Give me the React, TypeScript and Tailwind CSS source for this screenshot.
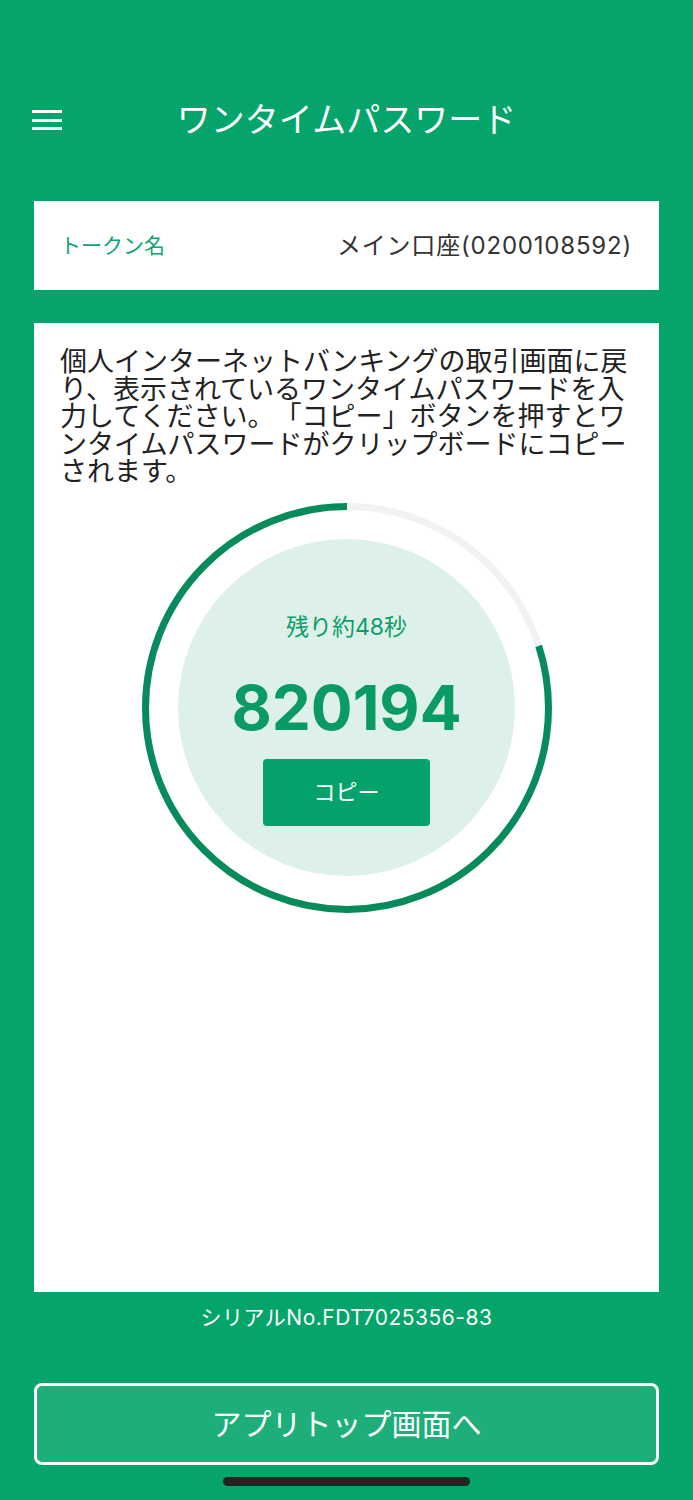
import React from 'react'

const RING_R = 201.5
const RING_C = 2 * Math.PI * RING_R

function ProgressRing({ remaining }: { remaining: number }) {
  // remaining: 0..1 share of the ring still green
  const green = RING_C * remaining
  return (
    <svg className="absolute inset-0" width="410" height="410" viewBox="0 0 410 410">
      <circle cx="205" cy="205" r={RING_R} fill="none" stroke="#F2F2F2" strokeWidth="7" />
      <circle
        cx="205"
        cy="205"
        r={RING_R}
        fill="none"
        stroke="#078B5A"
        strokeWidth="7"
        strokeDasharray={`${green} ${RING_C}`}
        strokeDashoffset={-(RING_C - green)}
        transform="rotate(-90 205 205)"
      />
    </svg>
  )
}

export default function App() {
  return (
    <div className="min-h-[1500px] w-full bg-[#04A46B] flex flex-col font-['Inter','Noto_Sans_CJK_JP',sans-serif] [text-spacing-trim:space-all]">
      {/* Header */}
      <header className="mt-[90px] h-[60px] px-[32px] grid grid-cols-[1fr_auto_1fr] items-center">
        <button className="flex flex-col gap-[5.5px] w-[30px]" aria-label="menu">
          <span className="block h-[3px] w-[30px] bg-white" />
          <span className="block h-[3px] w-[30px] bg-white" />
          <span className="block h-[3px] w-[30px] bg-white" />
        </button>
        <h1 className="text-white text-[34px] leading-[40px] font-normal">ワンタイムパスワード</h1>
        <div />
      </header>

      <div className="px-[34px] flex flex-col">
        {/* Token name */}
        <div className="mt-[51px] h-[89px] bg-white flex items-center justify-between pl-[26px] pr-[27px]">
          <span className="text-[21px] text-[#0FA56F]">トークン名</span>
          <span className="text-[24px] tracking-[0.8px] text-[#333333]">メイン口座(0200108592)</span>
        </div>

        {/* Main card */}
        <div className="mt-[33px] h-[969px] bg-white pt-[25px] px-[26px] flex flex-col">
          <p className="text-[27px] leading-[27.5px] text-[#222222]">
            個人インターネットバンキングの取引画面に戻
            <br />
            り、表示されているワンタイムパスワードを入
            <br />
            力してください。「コピー」ボタンを押すとワ
            <br />
            ンタイムパスワードがクリップボードにコピー
            <br />
            されます。
          </p>

          <div className="relative mt-[17px] mx-auto w-[410px] h-[410px] flex items-center justify-center">
            <ProgressRing remaining={0.8} />
            <div className="relative w-[337px] h-[337px] rounded-full bg-[#DDF1EA] flex flex-col items-center">
              <div className="mt-[72px] text-[23px] leading-[32px] text-[#0C9E66]">残り約48秒</div>
              <div className="mt-[30px] text-[62px] leading-[70px] font-bold text-[#0A9A63]">820194</div>
              <button className="mt-[16px] w-[167px] h-[67px] rounded-[4px] bg-[#05A36B] text-white text-[22px]">
                コピー
              </button>
            </div>
          </div>
        </div>

        {/* Serial */}
        <div className="mt-[11px] text-center text-white text-[21px] leading-[30px] tracking-[0.5px]">
          シリアルNo.FDT7025356-83
        </div>

        {/* Back to top */}
        <button className="mt-[50px] h-[82px] rounded-[8px] border-[3px] border-white bg-[#1DAE79] text-white text-[30px]">
          アプリトップ画面へ
        </button>

        <div className="mt-[12px] mx-auto w-[247px] h-[9px] rounded-full bg-[#232323]" />
      </div>
    </div>
  )
}
